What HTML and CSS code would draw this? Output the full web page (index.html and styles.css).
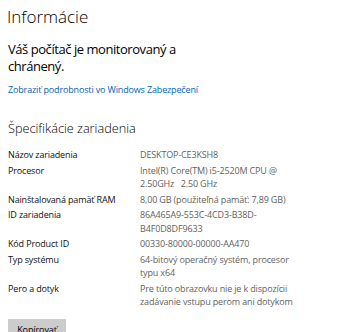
FILE: index.html
```html
<!DOCTYPE html>
<html lang="sk">
<head>
<meta charset="utf-8">
<link rel="stylesheet" href="styles.css">
</head>
<body>
<div class="page">
  <h1 class="title">Informácie</h1>
  <p class="status">Váš počítač je monitorovaný a<br>chránený.</p>
  <a class="link" href="#">Zobraziť podrobnosti vo Windows Zabezpečení</a>
  <h2 class="section">Špecifikácie zariadenia</h2>
  <div class="specs">
    <div class="row"><div class="label">Názov zariadenia</div><div class="value">DESKTOP-CE3KSH8</div></div>
    <div class="row"><div class="label">Procesor</div><div class="value">Intel(R) Core(TM) i5-2520M CPU @<br>2.50GHz&nbsp;&nbsp;&nbsp;2.50 GHz</div></div>
    <div class="row"><div class="label">Nainštalovaná pamäť RAM</div><div class="value">8,00 GB (použiteľná pamäť: 7,89 GB)</div></div>
    <div class="row"><div class="label">ID zariadenia</div><div class="value">86A465A9-553C-4CD3-B38D-<br>B4F0D8DF9633</div></div>
    <div class="row"><div class="label">Kód Product ID</div><div class="value">00330-80000-00000-AA470</div></div>
    <div class="row"><div class="label">Typ systému</div><div class="value">64-bitový operačný systém, procesor<br>typu x64</div></div>
    <div class="row"><div class="label">Pero a dotyk</div><div class="value">Pre túto obrazovku nie je k dispozícii<br>zadávanie vstupu perom ani dotykom</div></div>
  </div>
  <button class="copy">Kopírovať</button>
</div>
</body>
</html>
```
FILE: styles.css
```css
html, body {
  margin: 0;
  padding: 0;
  background: #ffffff;
}
body {
  font-family: "Open Sans", "Noto Sans", sans-serif;
  color: #000;
  overflow: hidden;
}
.page {
  padding: 6px 8px 0 8px;
}
.title {
  margin: 0 0 0 -1px;
  font-weight: 300;
  font-size: 17px;
  line-height: 22px;
}
.status {
  margin: 13px 0 0 0;
  font-size: 13px;
  font-weight: 400;
  line-height: 17px;
  letter-spacing: -0.45px;
}
.link {
  display: block;
  margin-top: 8.5px;
  font-size: 9px;
  line-height: 12px;
  letter-spacing: -0.15px;
  color: #0063b1;
  text-decoration: none;
}
.section {
  margin: 24px 0 0 0;
  font-weight: 300;
  font-size: 12.7px;
  line-height: 17px;
}
.specs {
  margin-top: 11.7px;
  display: flex;
  flex-direction: column;
  gap: 2px;
}
.row {
  display: grid;
  grid-template-columns: 132px 1fr;
  font-size: 9px;
  line-height: 13.5px;
  letter-spacing: -0.15px;
}
.label {
  color: #111;
}
.value {
  color: #5f5f5f;
}
.copy {
  display: block;
  margin-top: 10px;
  border: 0;
  background: #cccccc;
  font-family: inherit;
  font-size: 9px;
  letter-spacing: -0.1px;
  width: 58px;
  height: 21px;
  padding: 0;
  text-align: center;
  color: #000;
}
```
